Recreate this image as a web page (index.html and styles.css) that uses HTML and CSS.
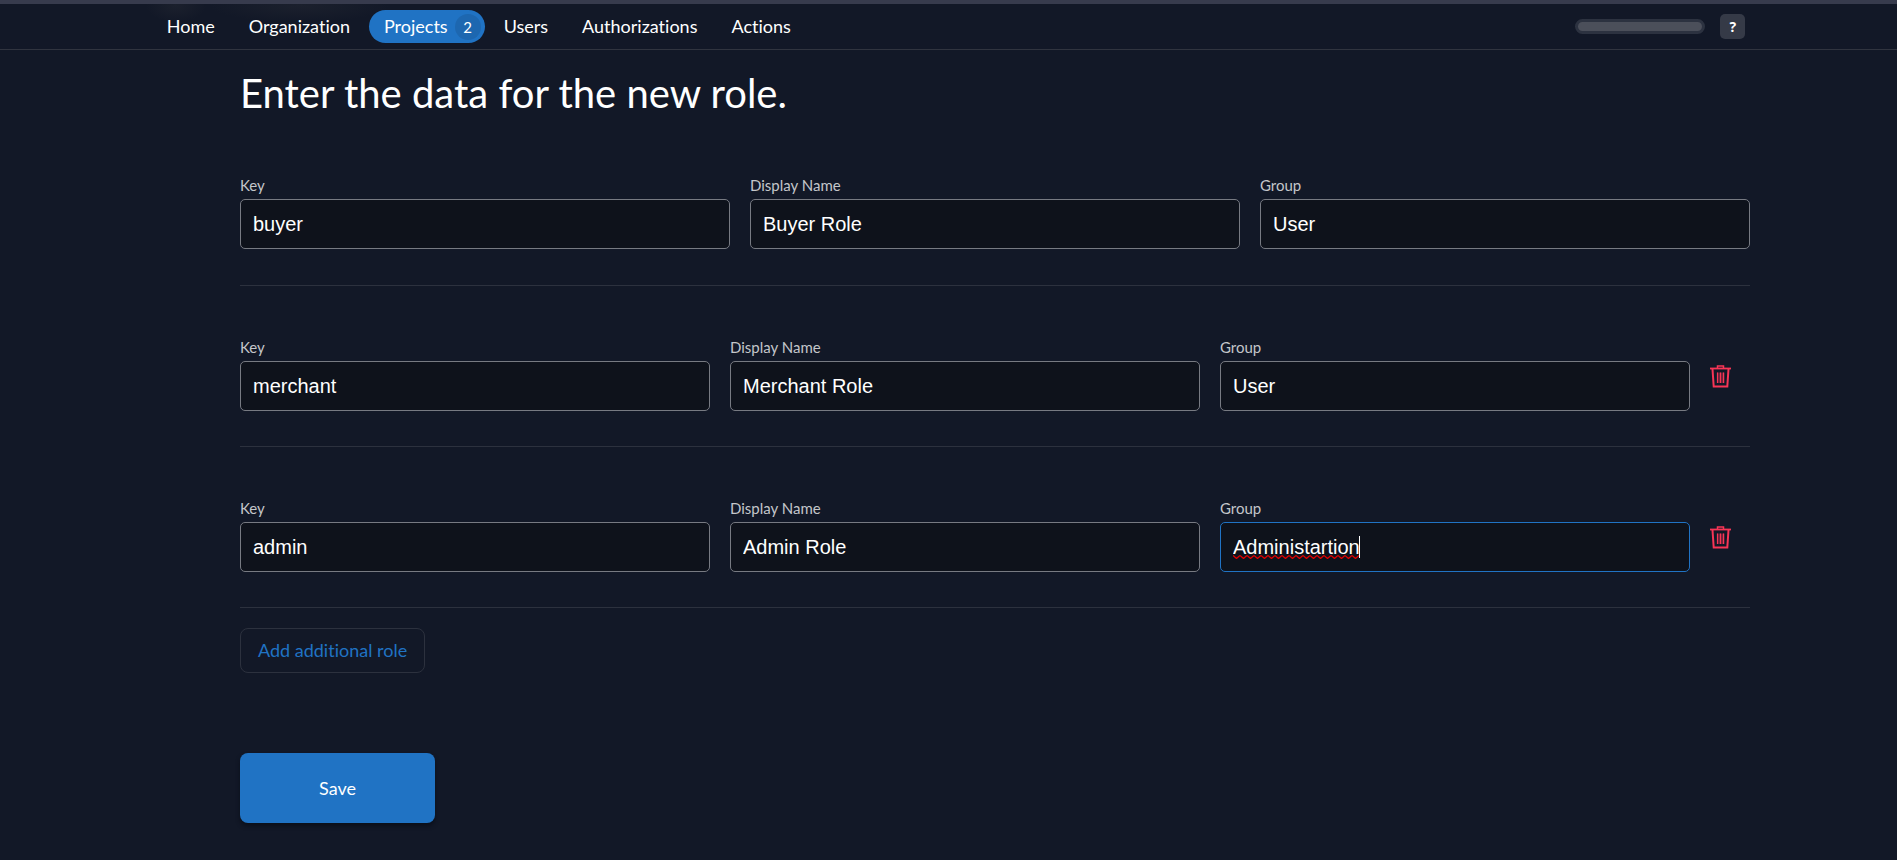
FILE: index.html
```html
<!DOCTYPE html>
<html lang="en">
<head>
<meta charset="utf-8">
<title>Create role</title>
<link rel="stylesheet" href="styles.css">
</head>
<body>
<header class="topbar">
  <nav class="nav">
    <a class="nav-link" href="#">Home</a>
    <a class="nav-link" href="#">Organization</a>
    <a class="nav-link active" href="#">Projects <span class="badge">2</span></a>
    <a class="nav-link" href="#">Users</a>
    <a class="nav-link" href="#">Authorizations</a>
    <a class="nav-link" href="#">Actions</a>
  </nav>
  <div class="tools">
    <div class="progress"></div>
    <button class="help" type="button">?</button>
  </div>
</header>
<main class="content">
  <h1 class="title">Enter the data for the new role.</h1>
  <form class="form">
    <div class="row">
      <label class="field"><span class="label">Key</span><input class="input" type="text" value="buyer"></label>
      <label class="field"><span class="label">Display Name</span><input class="input" type="text" value="Buyer Role"></label>
      <label class="field"><span class="label">Group</span><input class="input" type="text" value="User"></label>
    </div>
    <div class="row">
      <label class="field"><span class="label">Key</span><input class="input" type="text" value="merchant"></label>
      <label class="field"><span class="label">Display Name</span><input class="input" type="text" value="Merchant Role"></label>
      <label class="field"><span class="label">Group</span><input class="input" type="text" value="User"></label>
      <button class="remove" type="button" aria-label="Remove role">
        <svg class="trash" viewBox="0 0 21 23" fill="none" stroke="currentColor" stroke-width="2"><path d="M0 3.5h21" stroke-width="1.800"/><path d="M7.500 3.500V1h6v2.500" stroke-width="1.500"/><path d="M2.500 4l1.200 17.500h13.600L18.500 4"/><path d="M7 7.500h7.500v10.500H7z" fill="currentColor" fill-opacity=".35" stroke="none"/><path d="M7.500 7.500v10.500M10.500 7.500v10.500M13.500 7.500v10.500" stroke-width="1.200"/></svg>
      </button>
    </div>
    <div class="row">
      <label class="field"><span class="label">Key</span><input class="input" type="text" value="admin"></label>
      <label class="field"><span class="label">Display Name</span><input class="input" type="text" value="Admin Role"></label>
      <label class="field"><span class="label">Group</span><input class="input focused" type="text" value="Administartion" spellcheck="false">
        <svg class="squiggle" width="126" height="4"><defs><pattern id="wave" width="7" height="4" patternUnits="userSpaceOnUse"><path d="M0 .5L3.500 3.500L7 .5" fill="none" stroke="#e00000" stroke-width="1.300"/></pattern></defs><rect width="126" height="4" fill="url(#wave)"/></svg>
        <span class="caret"></span>
      </label>
      <button class="remove" type="button" aria-label="Remove role">
        <svg class="trash" viewBox="0 0 21 23" fill="none" stroke="currentColor" stroke-width="2"><path d="M0 3.5h21" stroke-width="1.800"/><path d="M7.500 3.500V1h6v2.500" stroke-width="1.500"/><path d="M2.500 4l1.200 17.500h13.600L18.500 4"/><path d="M7 7.500h7.500v10.500H7z" fill="currentColor" fill-opacity=".35" stroke="none"/><path d="M7.500 7.500v10.500M10.500 7.500v10.500M13.500 7.500v10.500" stroke-width="1.200"/></svg>
      </button>
    </div>
    <button class="add" type="button">Add additional role</button>
    <button class="save" type="submit">Save</button>
  </form>
</main>
</body>
</html>
```
FILE: styles.css
```css
* { box-sizing: border-box; }
body {
  margin: 0;
  min-height: 100vh;
  background: #121827;
  color: #fff;
  font-family: Lato, "Liberation Sans", sans-serif;
  font-variant-ligatures: none;
}
.topbar {
  display: flex;
  align-items: center;
  justify-content: space-between;
  height: 50px;
  padding: 0 8%;
  border-top: 4px solid #373b4d;
  border-bottom: 1px solid #30343f;
  background:
    radial-gradient(30px 16px at 176px 2px, #1b202d, transparent),
    radial-gradient(90px 16px at 300px 2px, #1b202d, transparent);
}
.nav { display: flex; align-items: center; gap: 4px; }
.nav-link {
  display: flex;
  align-items: center;
  gap: 7px;
  height: 33px;
  padding: 0 15px 2px;
  border-radius: 17px;
  color: #fff;
  font-size: 18px;
  text-decoration: none;
}
.nav-link.active { padding-right: 4px; background: #2073c4; }
.badge {
  width: 26px;
  height: 26px;
  margin-top: 2px;
  border-radius: 50%;
  background: #1d67b0;
  font-size: 15px;
  line-height: 26px;
  text-align: center;
}
.tools { display: flex; align-items: center; gap: 15px; }
.progress {
  width: 130px;
  height: 15px;
  border: 3px solid #2c3240;
  border-radius: 8px;
  background: #4b4f5a;
}
.help {
  width: 25px;
  height: 25px;
  padding: 0;
  border: 0;
  border-radius: 5px;
  background: #353a47;
  color: #fff;
  font: bold 14px "Open Sans", sans-serif;
}
.content { padding: 16px 147px 32px 240px; }
.title { margin: 0 0 55px; font-size: 40px; font-weight: 400; line-height: 54px; }
.row {
  display: flex;
  gap: 20px;
  height: 161px;
  padding-top: 51px;
  border-bottom: 1px solid #2c313e;
}
.row:first-child { height: 111px; padding-top: 0; }
.field { position: relative; flex: 1; min-width: 0; }
.label { display: block; color: #c4c6ca; font-size: 15px; line-height: 20px; margin-bottom: 4px; }
.input {
  display: block;
  width: 100%;
  height: 50px;
  padding: 0 12px;
  border: 1px solid #777a82;
  border-radius: 5px;
  outline: 0;
  background: #0e121b;
  color: #fff;
  font: 20px "Liberation Sans", Arial, sans-serif;
}
.input.focused { border-color: #2073c4; }
.squiggle { position: absolute; left: 13px; top: 57px; }
.caret { position: absolute; left: 139px; top: 38px; width: 1px; height: 22px; background: #fff; }
.remove {
  display: flex;
  align-items: center;
  justify-content: flex-start;
  width: 40px;
  height: 40px;
  margin-top: 19px;
  padding: 0;
  border: 0;
  background: none;
  color: #f83556;
}
.trash { width: 21px; height: 23px; }
.add, .save {
  display: block;
  border-radius: 8px;
  font-family: inherit;
  font-size: 18px;
  font-variant-ligatures: none;
}
.add {
  height: 45px;
  margin-top: 20px;
  padding: 0 17px 2px;
  border: 1px solid #2c313e;
  background: none;
  color: #2073c4;
}
.save {
  width: 195px;
  height: 70px;
  margin-top: 80px;
  border: 0;
  background: #2073c4;
  color: #fff;
  box-shadow: 0 3px 4px #0b0f1a;
}
```
